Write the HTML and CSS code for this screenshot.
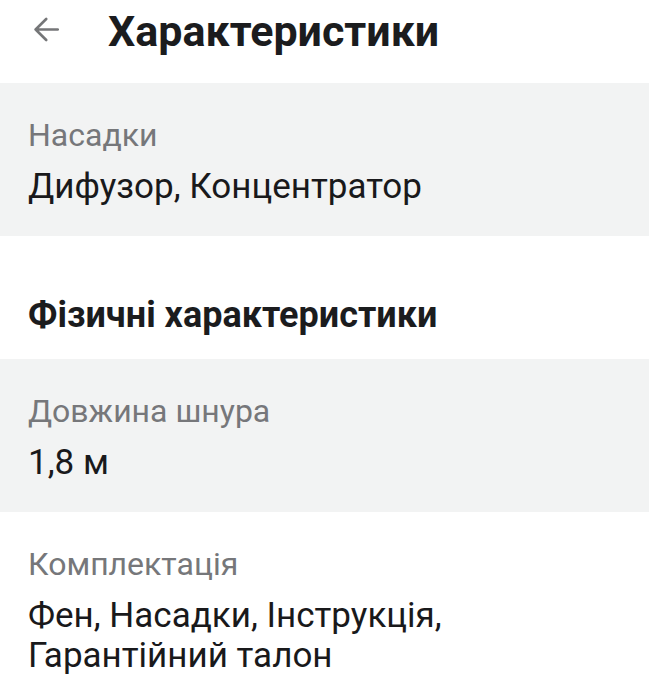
FILE: index.html
```html
<!DOCTYPE html>
<html lang="uk">
<head>
    <meta charset="UTF-8">
    <meta name="viewport" content="width=device-width, initial-scale=1.0">
    <title>Характеристики</title>
    <link rel="stylesheet" href="styles.css">
</head>
<body>
    <header class="top-bar">
        <button class="back-button" aria-label="Назад">
            <svg class="back-icon" viewBox="0 0 25 25" width="25" height="25">
                <path d="M23.8 12.5H1.6M12.2 2L1.6 12.5 12.2 23" fill="none" stroke="currentColor" stroke-width="2.6" stroke-linecap="round" stroke-linejoin="round"/>
            </svg>
        </button>
        <h1 class="page-title">Характеристики</h1>
    </header>

    <div class="spec-list">
        <div class="spec-row spec-row-shaded">
            <div class="spec-label">Насадки</div>
            <div class="spec-value">Дифузор, Концентратор</div>
        </div>

        <h2 class="spec-group-title">Фізичні характеристики</h2>

        <div class="spec-row spec-row-shaded">
            <div class="spec-label">Довжина шнура</div>
            <div class="spec-value">1,8 м</div>
        </div>

        <div class="spec-row">
            <div class="spec-label">Комплектація</div>
            <div class="spec-value">Фен, Насадки, Інструкція, Гарантійний талон</div>
        </div>
    </div>
</body>
</html>
```

FILE: styles.css
```css
body {
    margin: 0;
    background: #ffffff;
    font-family: Roboto, "Noto Sans", sans-serif;
    color: #1b1c1e;
}

.top-bar {
    display: flex;
    align-items: flex-start;
    gap: 49px;
    height: 83px;
    padding: 7px 0 0 34px;
    box-sizing: border-box;
}

.back-button {
    display: flex;
    border: none;
    background-color: transparent;
    padding: 0;
    margin-top: 10px;
    color: #757678;
    cursor: pointer;
}

.page-title {
    margin: 0;
    font-size: 43px;
    font-weight: 700;
    line-height: 48px;
}

.spec-row {
    padding: 32px 28px 29px;
}

.spec-row-shaded {
    background-color: #f2f3f3;
}

.spec-label {
    font-size: 32px;
    line-height: 40px;
    color: #76777a;
}

.spec-value {
    margin-top: 12px;
    font-size: 35px;
    line-height: 40px;
    color: #19191b;
}

.spec-group-title {
    margin: 0;
    padding: 59px 28px 24px;
    font-size: 36px;
    font-weight: 700;
    line-height: 40px;
}
```
